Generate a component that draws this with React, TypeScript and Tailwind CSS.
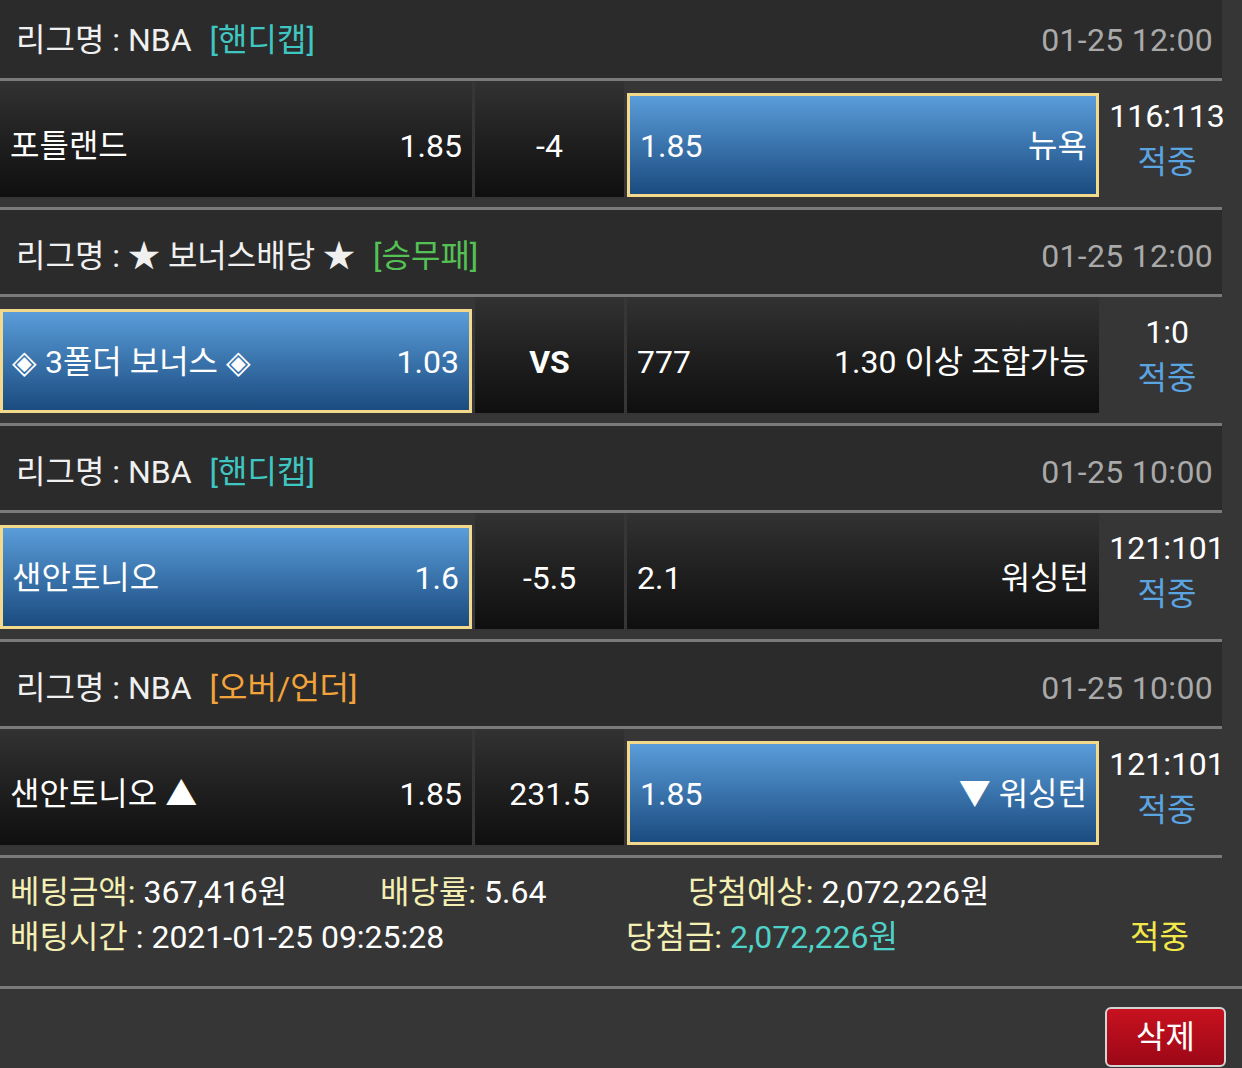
import React from "react";

type Game = {
  league: string;
  type: string;
  typeColor: string;
  date: string;
  home: string;
  homeOdds: string;
  mid: string;
  awayOdds: string;
  away: string;
  pick: "home" | "away";
  score: string;
  bold?: boolean;
};

const games: Game[] = [
  { league: "NBA", type: "[핸디캡]", typeColor: "text-[#3fc6c2]", date: "01-25 12:00", home: "포틀랜드", homeOdds: "1.85", mid: "-4", awayOdds: "1.85", away: "뉴욕", pick: "away", score: "116:113" },
  { league: "★ 보너스배당 ★", type: "[승무패]", typeColor: "text-[#55c155]", date: "01-25 12:00", home: "◈ 3폴더 보너스 ◈", homeOdds: "1.03", mid: "VS", awayOdds: "777", away: "1.30 이상 조합가능", pick: "home", score: "1:0", bold: true },
  { league: "NBA", type: "[핸디캡]", typeColor: "text-[#3fc6c2]", date: "01-25 10:00", home: "샌안토니오", homeOdds: "1.6", mid: "-5.5", awayOdds: "2.1", away: "워싱턴", pick: "home", score: "121:101" },
  { league: "NBA", type: "[오버/언더]", typeColor: "text-[#f2a33a]", date: "01-25 10:00", home: "샌안토니오 ▲", homeOdds: "1.85", mid: "231.5", awayOdds: "1.85", away: "▼ 워싱턴", pick: "away", score: "121:101" },
];

// dark cells start at the row top; text sits level with the blue (bordered) cells
const darkCell = "h-[116px] pt-[14px] bg-gradient-to-b from-[#323232] to-[#0f0f0f]";
const blueCell = "h-[104px] pt-[2px] border-[3px] border-[#f2d98c] bg-gradient-to-b from-[#5a9dda] to-[#1b4c80]";

function GameBlock({ g }: { g: Game }) {
  return (
    <div>
      <div className="h-[84px] pt-2 bg-[#2b2b2b] flex items-center justify-between pl-4 pr-[9px]">
        <div className="flex items-center gap-[18px] text-[#f0f0f0]">
          <span>리그명 : {g.league}</span>
          <span className={g.typeColor}>{g.type}</span>
        </div>
        <span className="text-[#a9a9a9] tracking-[0.3px]">{g.date}</span>
      </div>
      <div className="h-[3px] bg-[#7a7a7a]" />
      <div className="h-[126px] bg-[#363636] flex items-end gap-[3px] pb-[10px]">
        <div
          className={`w-[472px] flex items-center justify-between text-white ${
            g.pick === "home" ? `${blueCell} pl-[9px] pr-[10px]` : `${darkCell} pl-[10px] pr-[10px]`
          }`}
        >
          <span>{g.home}</span>
          <span>{g.homeOdds}</span>
        </div>
        <div className={`w-[149px] flex items-center justify-center text-white ${darkCell} ${g.bold ? "font-bold" : ""}`}>
          {g.mid}
        </div>
        <div
          className={`w-[472px] flex items-center justify-between text-white ${
            g.pick === "away" ? `${blueCell} pl-[10px] pr-[9px]` : `${darkCell} pl-[10px] pr-[10px]`
          }`}
        >
          <span>{g.awayOdds}</span>
          <span>{g.away}</span>
        </div>
        <div className="w-[120px] pl-[10px] self-stretch flex flex-col items-center justify-center pb-[4px] pt-[4px] leading-[46px]">
          <span className="text-white whitespace-nowrap">{g.score}</span>
          <span className="text-[#5ba4e2]">적중</span>
        </div>
      </div>
      <div className="h-[3px] bg-[#7a7a7a]" />
    </div>
  );
}

export default function App() {
  return (
    <div
      className="w-[1242px] h-[1068px] overflow-hidden bg-[#363636] text-[32px] leading-none"
      style={{ fontFamily: 'Roboto, "Noto Sans CJK KR", sans-serif' }}
    >
      <div className="w-[1222px] -mt-[6px]">
        {games.map((g, i) => (
          <GameBlock key={i} g={g} />
        ))}
      </div>
      <div className="-mt-[3px] h-[131px] pt-[15px] leading-[45px]">
        <div className="flex pl-[10px]">
          <div className="w-[370px]">
            <span className="text-[#f4efb3]">베팅금액:</span>
            <span className="text-white"> 367,416원</span>
          </div>
          <div className="w-[308px]">
            <span className="text-[#f4efb3]">배당률:</span>
            <span className="text-white"> 5.64</span>
          </div>
          <div>
            <span className="text-[#f4efb3]">당첨예상:</span>
            <span className="text-white"> 2,072,226원</span>
          </div>
        </div>
        <div className="flex pl-[10px]">
          <div className="w-[616px]">
            <span className="text-[#f4efb3]">배팅시간</span>
            <span className="text-white"> : 2021-01-25 09:25:28</span>
          </div>
          <div className="w-[504px]">
            <span className="text-[#f4efb3]">당첨금:</span>
            <span className="text-[#4fd2c8]"> 2,072,226원</span>
          </div>
          <div className="text-[#f3e84a]">적중</div>
        </div>
      </div>
      <div className="h-[3px] bg-[#7a7a7a]" />
      <div className="flex justify-end pr-[16px] pt-[18px]">
        <button className="w-[121px] h-[60px] rounded-[6px] border-2 border-[#d4d4d4] bg-gradient-to-b from-[#c8111f] to-[#9c0817] text-white text-[32px] flex items-center justify-center">
          삭제
        </button>
      </div>
    </div>
  );
}
